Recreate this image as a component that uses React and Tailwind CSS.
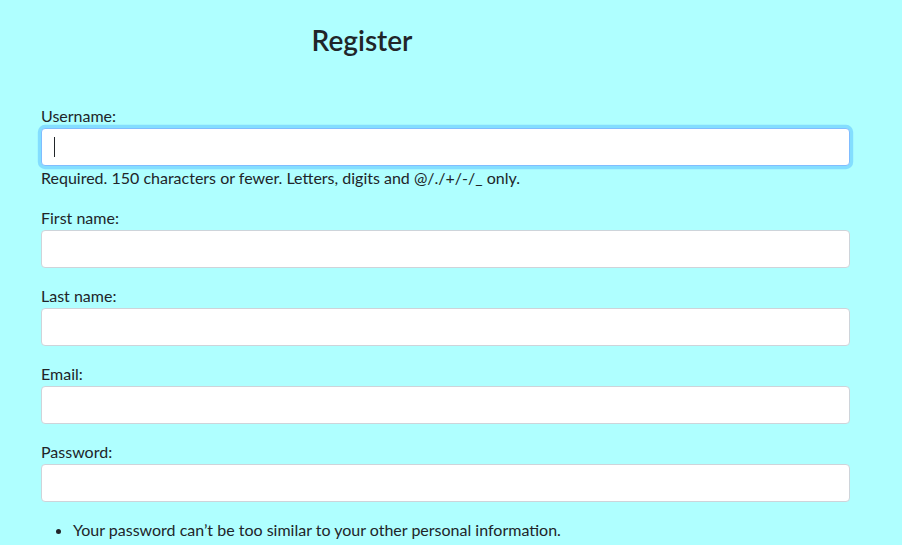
// Register form page
const FIELDS = [
  { id: "first_name", label: "First name:" },
  { id: "last_name",  label: "Last name:" },
  { id: "email",      label: "Email:", type: "email" },
  { id: "password1",  label: "Password:", type: "password" },
]

export default function App() {
  return (
    <div className="min-h-screen bg-[#afffff] text-[#212529] text-[16px] leading-6 overflow-hidden"
      style={{ fontFamily: "Lato, 'Open Sans', sans-serif" }}>
      <div className="w-[724px] pt-[24px] text-center">
        <h3 className="text-[28px] leading-[1.2] font-semibold">Register</h3>
      </div>

      <form className="px-[41px] pt-[46px] w-[891px]" onSubmit={e => e.preventDefault()}>
        {/* Username, focused */}
        <div className="mb-4">
          <label htmlFor="username" className="block">Username:</label>
          <div className="relative">
            <input id="username"
              className="block w-full h-[38px] px-3 bg-white rounded border border-[#80bdff] shadow-[0_0_0_3.2px_rgba(0,123,255,0.25)] outline-none caret-transparent" />
            {/* text caret */}
            <span className="absolute left-[13px] top-[9px] w-px h-[20px] bg-[#212529] pointer-events-none" />
          </div>
          <p className="leading-6">Required. 150 characters or fewer. Letters, digits and @/./+/-/_ only.</p>
        </div>

        {FIELDS.map(f => (
          <div key={f.id} className="mb-4">
            <label htmlFor={f.id} className="block">{f.label}</label>
            <input id={f.id} type={f.type || "text"}
              className="block w-full h-[38px] px-3 bg-white rounded border border-[#ced4da] outline-none" />
          </div>
        ))}

        <ul className="list-disc pl-8 mt-[16px]">
          <li>Your password can’t be too similar to your other personal information.</li>
        </ul>
      </form>
    </div>
  )
}
